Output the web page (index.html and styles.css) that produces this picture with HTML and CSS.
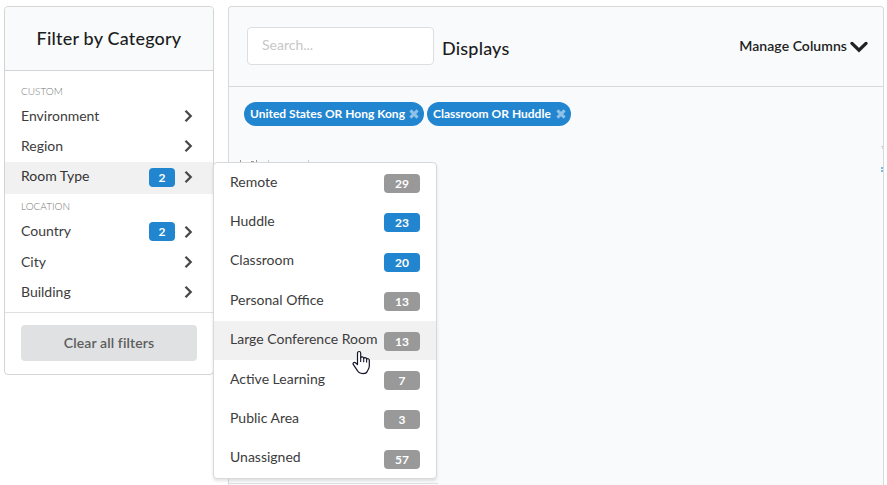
FILE: index.html
```
<!DOCTYPE html>
<html lang="en">
<head>
<meta charset="utf-8">
<title>Displays</title>
<link rel="stylesheet" href="styles.css">
</head>
<body>
<svg class="defs" width="0" height="0">
  <symbol id="chev" viewBox="0 0 9 14"><path d="M1.5 1.8 6.7 7 1.5 12.2" fill="none" stroke="currentColor" stroke-width="2.3"/></symbol>
  <symbol id="cross" viewBox="0 0 10 10"><path d="M1.4 1.4 8.6 8.6M8.6 1.4 1.4 8.6" fill="none" stroke="currentColor" stroke-width="3"/></symbol>
</svg>
<div class="page">
  <aside class="sidebar">
    <h2 class="sidebar-title">Filter by Category</h2>
    <div class="group">Custom</div>
    <div class="row"><span>Environment</span><svg class="chev"><use href="#chev"/></svg></div>
    <div class="row"><span>Region</span><svg class="chev"><use href="#chev"/></svg></div>
    <div class="row active"><span>Room Type</span><b class="count">2</b><svg class="chev"><use href="#chev"/></svg>
    </div>
    <div class="group location">Location</div>
    <div class="row"><span>Country</span><b class="count">2</b><svg class="chev"><use href="#chev"/></svg></div>
    <div class="row"><span>City</span><svg class="chev"><use href="#chev"/></svg></div>
    <div class="row"><span>Building</span><svg class="chev"><use href="#chev"/></svg></div>
    <div class="footer"><button class="clear">Clear all filters</button></div>
  </aside>
  <main class="main">
    <header class="toolbar">
      <input class="search" placeholder="Search...">
      <h2 class="title">Displays</h2>
      <div class="manage">Manage Columns<svg width="18" height="12" viewBox="0 0 18 12"><path d="M2 2.4 9 9.2 16 2.4" fill="none" stroke="currentColor" stroke-width="3.3" stroke-linecap="round"/></svg></div>
    </header>
    <div class="tags">
      <span class="tag">United States OR Hong Kong<svg><use href="#cross"/></svg></span>
      <span class="tag">Classroom OR Huddle<svg><use href="#cross"/></svg></span>
    </div>
    <svg class="edge" width="656" height="42" viewBox="0 0 656 42"><path d="M12 14h16v3H12z" fill="#fff"/><path d="M12.5 14v2M28.5 14v2M23 15.5h3" stroke="#999"/><path d="M40.5 14v2M80.5 14v2" stroke="#ccc"/><path d="M653 0h2v3" fill="none" stroke="#bbb"/><path d="M653 21h2v2h-2zm0 3h2v2h-2z" fill="#7fb8e6"/></svg>
    <div class="table-edge"></div>
  </main>
</div>
<div class="menu">
  <div class="item"><span>Remote</span><b>29</b></div>
  <div class="item"><span>Huddle</span><b class="on">23</b></div>
  <div class="item"><span>Classroom</span><b class="on">20</b></div>
  <div class="item"><span>Personal Office</span><b>13</b></div>
  <div class="item hover"><span>Large Conference Room</span><b>13</b></div>
  <div class="item"><span>Active Learning</span><b>7</b></div>
  <div class="item"><span>Public Area</span><b>3</b></div>
  <div class="item"><span>Unassigned</span><b>57</b></div>
</div>
<svg class="cursor" width="19" height="25" viewBox="0 0 19 25"><path d="M5.5 14.5V3.2C5.5.9 8.7.9 8.7 3.2V8C9 6.3 11.7 6.5 11.7 8.4 12.2 7 14.6 7.3 14.6 9.3 15.3 8.2 17.3 8.6 17.3 10.4V16C17.3 18.5 15.7 20 15.2 21.5 14.6 23.2 13.5 23.6 11 23.6 8 23.6 6.5 22.8 5.4 20.6L1.4 14.7C.3 12.9 2.2 11.8 3.5 12.8Z" fill="#fff" stroke="#14142b" stroke-width="1.2" stroke-linejoin="round"/><path d="M8.7 7.5V12M11.7 8V12.2M14.6 9V12.5" fill="none" stroke="#14142b" stroke-width="1.1"/></svg>
</body>
</html>
```
FILE: styles.css
```
* { box-sizing: border-box; }
body { margin: 0; width: 887px; height: 485px; overflow: hidden; background: #fff; font-family: Lato, "Liberation Sans", sans-serif; font-size: 14px; color: #3c3c3c; }
.defs { position: absolute; }
.page { display: flex; align-items: flex-start; gap: 14px; padding: 6px 0 0 4px; }
h2 { margin: 0; font-size: 18px; font-weight: 500; color: #1c1d1e; letter-spacing: .2px; }
.sidebar { width: 210px; height: 369px; border: 1px solid #d4d4d5; border-radius: 4px; background: #fff; }
.sidebar-title { height: 64px; line-height: 62px; text-align: center; background: #f9fafb; border-bottom: 1px solid #d4d4d5; border-radius: 4px 4px 0 0; }
.group { height: 30px; padding: 14px 16px 0; font-size: 10px; line-height: 13px; font-weight: 300; text-transform: uppercase; color: #777; }
.group.location { height: 22px; padding-top: 6px; }
.row { display: flex; align-items: center; height: 30.3px; padding: 0 20px 0 16px; }
.row span { flex: 1; position: relative; top: -1px; }
.row.active { height: 32px; padding-bottom: 2px; background: #f1f1f1; color: #333; }
.row.active .count { position: relative; top: 1px; }
.location + .row { margin-top: 1px; }
.chev { width: 9px; height: 14px; color: #484848; }
.count { width: 26px; height: 19px; margin-right: 9px; border-radius: 4px; background: #2185d0; color: #fff; font-size: 12px; line-height: 19px; text-align: center; }
.footer { margin-top: 5px; padding: 12px 16px; border-top: 1px solid #dfe0e1; }
.clear { display: block; width: 100%; height: 36px; padding: 0 0 1px; border: 0; border-radius: 4px; background: #e0e1e2; color: #5c5d5d; font: 600 14px Lato, sans-serif; letter-spacing: .12px; }
.main { width: 656px; height: 479px; overflow: hidden; background: #f9fafb; border: 1px solid #d8d9da; border-bottom: 0; border-radius: 4px 4px 0 0; }
.toolbar { display: flex; height: 80px; padding: 20px 15px 0 18px; border-bottom: 1px solid #d8d9da; }
.search { width: 187px; height: 38px; padding: 0 14px 3px; border: 1px solid #dededf; border-radius: 4px; background: #fff; font: 14px Lato, sans-serif; outline: 0; }
.search::placeholder { color: #c7c7c8; }
.title { margin-left: 8px; line-height: 42px; }
.manage { display: flex; align-items: center; gap: 3px; height: 36px; margin-left: auto; font-weight: 600; color: #222; letter-spacing: .05px; }
.manage svg { position: relative; top: 2px; }
.tags { display: flex; gap: 3px; height: 59px; padding: 15px 15px; }
.tag { display: flex; align-items: center; gap: 4px; height: 24px; padding: 0 5px 1px 6px; border-radius: 12px; background: #2185d0; color: #fff; font-size: 12px; font-weight: 700; white-space: nowrap; }
.tag + .tag { gap: 5px; }
.tag svg { width: 10px; height: 10px; color: #90c2e7; }
.edge { display: block; margin-left: -1px; }
.table-edge { width: 209px; height: 2px; margin-top: 295px; border-top: 1px solid #dfe0e1; background: #fafafa; }
.menu { position: absolute; left: 213px; top: 162px; width: 224px; height: 317px; border: 1px solid #d8d9da; border-radius: 4px; background: #fff; box-shadow: 0 2px 3px rgba(34,36,38,.12); }
.item { display: flex; justify-content: space-between; height: 39.375px; padding: 11px 16px 0; line-height: 17px; white-space: nowrap; }
.item span { position: relative; top: -1.3px; }
.item b { width: 36px; height: 19px; border-radius: 4px; background: #999; color: #fff; font-size: 12px; line-height: 19px; text-align: center; }
.item .on { background: #2185d0; }
.hover { background: #f1f1f1; }
.cursor { position: absolute; left: 352px; top: 350px; }
```
